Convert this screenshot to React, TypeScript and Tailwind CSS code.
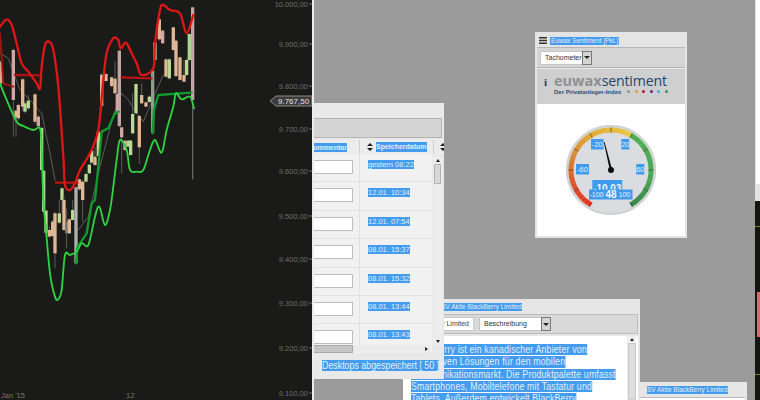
const sans = "font-['Liberation_Sans',Arial,sans-serif]";

type Pt = [number, number];
const line = (pts: Pt[]) => pts.map((p) => p.join(",")).join(" ");

// catmull-rom through the points, the bands are smoothed averages
function smooth(pts: Pt[]) {
  let d = `M${pts[0][0]} ${pts[0][1]}`;
  for (let i = 0; i < pts.length - 1; i++) {
    const p0 = pts[Math.max(i - 1, 0)];
    const p1 = pts[i];
    const p2 = pts[i + 1];
    const p3 = pts[Math.min(i + 2, pts.length - 1)];
    d += `C${p1[0] + (p2[0] - p0[0]) / 6} ${p1[1] + (p2[1] - p0[1]) / 6} ${p2[0] - (p3[0] - p1[0]) / 6} ${p2[1] - (p3[1] - p1[1]) / 6} ${p2[0]} ${p2[1]}`;
  }
  return d;
}

// x, wick top, wick bottom, body top, body bottom, colour
const candles: [number, number, number, number, number, string][] = [
  [3, 180, 262, 185, 250, "#d8ac90"], [40, 145, 410, 150, 300, "#d4a5a5"], [48, 330, 410, 332, 352, "#dfb794"],
  [55, 310, 362, 315, 355, "#dfb794"], [68, 235, 332, 238, 320, "#dfb794"], [75, 305, 340, 310, 335, "#b9d894"],
  [85, 285, 330, 302, 325, "#b9d894"], [105, 280, 372, 283, 365, "#dfb794"], [115, 345, 382, 350, 378, "#d4a5a5"],
  [125, 380, 515, 384, 510, "#a9d890"], [131, 510, 640, 512, 635, "#a9d890"], [138, 630, 702, 632, 698, "#b9d894"],
  [148, 680, 712, 690, 710, "#dfb794"], [158, 660, 712, 665, 708, "#dfb794"], [165, 635, 805, 640, 760, "#dfb794"],
  [178, 600, 672, 640, 668, "#b9d894"], [186, 562, 640, 565, 600, "#b9d894"], [192, 590, 692, 600, 690, "#dfb794"],
  [200, 625, 745, 665, 700, "#777777"], [208, 655, 702, 658, 700, "#dfb794"], [218, 600, 662, 630, 660, "#b9d894"],
  [228, 560, 792, 562, 790, "#b0b0b0"], [238, 535, 572, 538, 568, "#dfb794"], [248, 540, 665, 545, 600, "#dfb794"],
  [258, 518, 548, 522, 545, "#b9d894"], [268, 490, 522, 494, 520, "#b9d894"], [275, 448, 492, 452, 488, "#c9d494"],
  [285, 440, 498, 470, 495, "#dfb794"], [295, 390, 472, 395, 468, "#c9d494"], [305, 220, 322, 224, 318, "#dfb794"],
  [318, 220, 245, 222, 243, "#dfb794"], [335, 230, 262, 232, 258, "#dfb794"], [345, 185, 282, 236, 280, "#dfb794"],
  [352, 280, 342, 282, 340, "#d4a5a5"], [358, 150, 382, 152, 378, "#c4a5a5"], [365, 380, 520, 382, 412, "#d4a5a5"],
  [375, 420, 455, 422, 450, "#dfb794"], [385, 420, 442, 422, 440, "#b9d894"], [392, 420, 468, 422, 465, "#b9d894"],
  [398, 280, 402, 342, 400, "#b9d894"], [408, 250, 342, 252, 340, "#b9d894"], [418, 345, 492, 348, 442, "#dfb794"],
  [425, 250, 312, 285, 310, "#dfb794"], [438, 305, 322, 307, 320, "#dfb794"], [448, 285, 310, 290, 306, "#b9d894"],
  [458, 210, 402, 212, 398, "#8f9f8f"], [465, 125, 182, 127, 180, "#dfb794"], [478, 55, 122, 58, 118, "#dfb794"],
  [488, 88, 132, 92, 130, "#d4a5a5"], [498, 175, 232, 178, 230, "#dfb794"], [508, 175, 238, 178, 235, "#b9d894"],
  [520, 80, 152, 82, 150, "#dfb794"], [528, 118, 232, 122, 228, "#dfb794"], [540, 170, 242, 172, 240, "#dfb794"],
  [552, 180, 247, 225, 245, "#dfb794"], [560, 175, 228, 180, 225, "#b9d894"], [568, 100, 182, 102, 180, "#a9d890"],
  [578, 20, 320, 22, 300, "#c4a5a5"],
];

const axis: [string, number][] = [
  ["10.000,00", 4], ["9.900,00", 44], ["9.800,00", 86], ["9.700,00", 129], ["9.600,00", 171],
  ["9.500,00", 216], ["9.400,00", 259], ["9.300,00", 303], ["9.200,00", 348], ["9.100,00", 393],
];

const upperBand: Pt[] = [[0, 80], [20, 58], [35, 75], [50, 130], [65, 190], [85, 215], [110, 250], [120, 265], [125, 200], [135, 135], [148, 125], [160, 150], [175, 260], [190, 470], [195, 555], [210, 570], [225, 550], [240, 510], [270, 460], [295, 390], [310, 240], [320, 160], [340, 115], [355, 120], [362, 145], [378, 128], [395, 160], [410, 190], [425, 225], [460, 205], [465, 130], [480, 30], [490, 15], [510, 30], [540, 40], [560, 100], [580, 45]];
const lowerBand: Pt[] = [[0, 250], [20, 300], [50, 365], [70, 378], [100, 390], [120, 385], [125, 450], [130, 600], [138, 690], [150, 820], [165, 890], [175, 898], [185, 870], [195, 765], [210, 765], [230, 755], [245, 730], [265, 735], [285, 650], [298, 620], [315, 675], [330, 630], [340, 560], [350, 480], [360, 420], [380, 450], [390, 510], [410, 515], [430, 510], [450, 450], [465, 420], [485, 458], [500, 390], [520, 320], [528, 280], [545, 298], [570, 290], [582, 325]];

function Chart() {
  return (
    <svg width="312" height="400" className={`block shrink-0 bg-[#1a1a18] ${sans}`}>
      <g transform="scale(0.3333)" fill="none" strokeLinejoin="round" strokeLinecap="round">
        <polyline points={line([[0, 160], [25, 175], [45, 230], [60, 270], [90, 300], [125, 340], [150, 460], [165, 540]])} stroke="#6a6a6a" strokeWidth="2.5" />
        <polyline points={line([[235, 690], [265, 650], [300, 500], [340, 345], [365, 280], [385, 300], [410, 340], [430, 365], [470, 270], [490, 225]])} stroke="#6a6a6a" strokeWidth="2.5" />
        {candles.map(([x, wt, wb, bt, bb, c]) => (
          <g key={x}>
            <line x1={x} x2={x} y1={wt} y2={wb} stroke="#5c5c5c" strokeWidth="3" strokeLinecap="butt" />
            <rect x={x - 5} y={bt} width="10" height={bb - bt} fill={c} />
          </g>
        ))}
        <line x1="578" x2="578" y1="320" y2="538" stroke="#666" strokeWidth="4" strokeLinecap="butt" />
        {/* support and resistance steps */}
        <polyline points={line([[45, 225], [122, 226]])} stroke="#a81414" strokeWidth="7" />
        <polyline points={line([[168, 548], [232, 548]])} stroke="#b81414" strokeWidth="7" />
        <polyline points={line([[365, 232], [455, 235]])} stroke="#b81414" strokeWidth="7" />
        <polyline points={line([[0, 100], [5, 170], [10, 250], [40, 260]])} stroke="#a01414" strokeWidth="6" />
        <polyline points={line([[228, 790], [232, 742], [260, 700], [275, 610], [285, 600], [295, 500], [305, 395], [325, 385], [345, 340], [356, 335]])} stroke="#0f9a2c" strokeWidth="7" />
        <polyline points={line([[458, 400], [462, 330], [475, 285], [575, 278]])} stroke="#0f9a2c" strokeWidth="7" />
        <path d={smooth(upperBand)} stroke="#dd1616" strokeWidth="7" />
        <path d={smooth(lowerBand)} stroke="#2fd33f" strokeWidth="5.5" />
      </g>
      {axis.map(([label, y]) => (
        <g key={label}>
          <text x="308" y={y + 3} textAnchor="end" fontSize="7.5" fill="#6e6e6e">{label}</text>
          <line x1="309" x2="312" y1={y} y2={y} stroke="#6e6e6e" />
        </g>
      ))}
      <polygon points="270,101 276,96 312,96 312,106 276,106" fill="#3c3c3c" stroke="#8a8a8a" />
      <text x="278" y="104" fontSize="8" fill="#e4e4e4">9.767,50</text>
      <text x="1" y="398" fontSize="7.5" fill="#777">Jan '15</text>
      <text x="126" y="398" fontSize="7.5" fill="#777">12</text>
    </svg>
  );
}

function Selected({ children, className = "" }: { children: React.ReactNode; className?: string }) {
  return <span className={`bg-[#439cee] text-[#e4eef8] ${className}`}>{children}</span>;
}

function Select({ label, width }: { label: string; width: string }) {
  return (
    <div className={`flex h-[14px] ${width} bg-white rounded-[1px] border border-[#c4c4c4]`}>
      <span className="flex-1 pl-[4px] text-[7px] leading-[12px] text-[#333] whitespace-nowrap overflow-hidden">{label}</span>
      <span className="w-[10px] h-[14px] -mt-px -mr-px flex items-center justify-center bg-[#d4d4d4] border border-[#777]">
        <span className="border-x-[3px] border-t-[3px] border-x-transparent border-t-[#222]" />
      </span>
    </div>
  );
}

function SortIcon() {
  return (
    <svg width="6" height="8" viewBox="0 0 6 8" className="shrink-0">
      <path d="M3 0 6 3H0ZM3 8 0 5h6Z" fill="#222" />
    </svg>
  );
}

const stops: [number, number[]][] = [
  [-150, [232, 48, 28]], [-105, [218, 88, 44]], [-70, [216, 138, 54]], [-30, [224, 170, 50]], [28, [232, 200, 62]],
  [32, [76, 176, 80]], [100, [72, 168, 84]], [150, [56, 130, 70]],
];

function stopColor(a: number) {
  for (let i = 1; i < stops.length; i++) {
    const [a0, c0] = stops[i - 1];
    const [a1, c1] = stops[i];
    if (a <= a1) {
      const t = (a - a0) / (a1 - a0);
      return `rgb(${c0.map((v, k) => Math.round(v + (c1[k] - v) * t)).join(",")})`;
    }
  }
  return "rgb(56,130,70)";
}

const polar = (r: number, deg: number): Pt => {
  const rad = (deg * Math.PI) / 180;
  return [r * Math.sin(rad), -r * Math.cos(rad)];
};

function GaugeLabel({ x, y, w, text }: { x: number; y: number; w: number; text: string }) {
  return (
    <g>
      <rect x={x} y={y} width={w} height="10.5" fill="#3f9bee" />
      <text x={x + w / 2} y={y + 7.8} textAnchor="middle" fontSize="7.5" fill="#eaf2fa">{text}</text>
    </g>
  );
}

function Gauge() {
  const segs = Array.from({ length: 60 }, (_, i) => -150 + i * 5);
  return (
    <svg width="100" height="100" viewBox="-50 -50 100 100" className={sans}>
      <circle r="45" fill="#dbdcdf" />
      <circle r="44" fill="none" stroke="#cfd3cf" strokeWidth="2" />
      {segs.map((a) => {
        const [x1, y1] = polar(40, a);
        const [x2, y2] = polar(40, a + 5.3);
        return <path key={a} d={`M${x1} ${y1}A40 40 0 0 1 ${x2} ${y2}`} fill="none" stroke={stopColor(a + 2.5)} strokeWidth="5" />;
      })}
      {[-150, -120, -90, -60, -30, 0, 30, 60, 90, 120, 150].map((a) => {
        const [x1, y1] = polar(37.5, a);
        const [x2, y2] = polar(42.5, a);
        return <line key={a} x1={x1} y1={y1} x2={x2} y2={y2} stroke="#55432a" strokeWidth="0.7" />;
      })}
      <GaugeLabel x={-20} y={-31} w={12.5} text="-20" />
      <GaugeLabel x={10.3} y={-31} w={8} text="20" />
      <GaugeLabel x={-35} y={-6} w={13} text="-60" />
      <GaugeLabel x={25.3} y={-6} w={8} text="60" />
      <polygon points="-7.2,-28 -6.4,-28 1.2,0 -1.2,0" fill="#0c0c0c" />
      <circle r="3" fill="#0c0c0c" />
      <rect x="-18.7" y="10" width="30" height="10" fill="#3f9bee" />
      <text x="-3.7" y="22" textAnchor="middle" fontSize="10" fontWeight="700" fill="#f2f6fa">-10.03</text>
      <rect x="-22" y="19.5" width="43.5" height="10" fill="#3f9bee" />
      <text x="-21.5" y="27" fontSize="7" fill="#eaf2fa">-100</text>
      <text x="0" y="28" textAnchor="middle" fontSize="10" fontWeight="700" fill="#f4f8fc">48</text>
      <text x="7.8" y="27" fontSize="7" fill="#eaf2fa">100</text>
    </svg>
  );
}

function EuwaxWindow() {
  const dots = ["#8f9296", "#e29a3a", "#b3123f", "#5c2a86", "#3fb0c8", "#2f9a56"];
  return (
    <div className={`absolute left-[221px] top-[32px] w-[152px] h-[206px] flex flex-col bg-[#e4e4e4] p-[2px] ${sans}`}>
      <div className="h-[13px] flex items-center gap-[3px] pl-[2px] shrink-0">
        <svg width="8" height="7" viewBox="0 0 8 7">
          <path d="M0 0h8v1.5H0ZM0 2.75h8v1.5H0ZM0 5.5h8V7H0Z" fill="#333" />
        </svg>
        <Selected className="text-[6.5px] leading-[8px] px-px">Euwax Sentiment [Pkt.]</Selected>
      </div>
      <div className="h-[21px] flex items-center pl-[3px] bg-[#d5d5d5] border-y border-[#b5b5b5] shrink-0">
        <Select label="Tachometer" width="w-[52px]" />
      </div>
      <div className="h-[36px] flex items-center gap-[7px] pl-[7px] bg-[#cfcfcf] border-t border-[#e8e8e8] shrink-0">
        <span className="w-[3px] -mt-[8px] font-['Liberation_Serif',serif] font-bold text-[11px] text-[#1f3f66]">i</span>
        <div className="flex flex-col mb-[5px]">
          <div className="flex items-baseline h-[15px] leading-[15px]">
            <span className="text-[14.5px] font-bold text-[#8e9094] font-['Open_Sans',sans-serif]">euwax</span>
            <span className="text-[14.2px] text-[#23466f] font-['Open_Sans',sans-serif] tracking-[-0.2px]">sentiment</span>
          </div>
          <div className="flex items-center">
            <span className="text-[6px] font-bold leading-[8px] text-[#29507e] w-[73px] whitespace-nowrap">Der Privatanleger-Index</span>
            <div className="flex gap-[4.5px]">
              {dots.map((c) => (
                <svg key={c} width="3" height="3" className="block"><circle cx="1.5" cy="1.5" r="1.5" fill={c} /></svg>
              ))}
            </div>
          </div>
        </div>
      </div>
      <div className="flex-1 bg-white flex items-center justify-center">
        <Gauge />
      </div>
    </div>
  );
}

const saved = ["gestern 08:22", "12.01. 10:34", "12.01. 07:54", "08.01. 15:37", "08.01. 15:32", "08.01. 13:44", "08.01. 13:43"];

function DesktopsWindow() {
  return (
    <div className={`absolute left-0 top-[103px] w-[130px] h-[276px] flex flex-col bg-[#e9e9e9] z-10 overflow-hidden ${sans}`}>
      <div className="h-[15px] shrink-0" />
      <div className="h-[20px] bg-[#d4d4d4] border-y border-r border-[#b4b4b4] shrink-0 mr-[2px]" />
      <div className="h-[14px] mt-[2px] flex items-center bg-[#ececec] shrink-0">
        <div className="w-[33px] flex justify-end overflow-hidden shrink-0">
          <Selected className="text-[7px] leading-[9px] font-bold whitespace-nowrap">Kommentar</Selected>
        </div>
        <div className="w-[13px] h-full border-r border-[#cfcfcf] mr-[7px] shrink-0" />
        <SortIcon />
        <Selected className="ml-[3px] shrink-0 text-[7px] leading-[10px] font-bold whitespace-nowrap">Speicherdatum</Selected>
        <div className="ml-[6px] h-full border-l border-[#cfcfcf] pl-[6px] flex items-center shrink-0"><SortIcon /></div>
      </div>
      <div className="h-[191px] flex shrink-0">
        <div className="w-[118px] flex flex-col shrink-0">
          {saved.map((d) => (
            <div key={d} className="h-[28.4px] shrink-0 flex bg-[#f1f1f1] border-b border-[#e2e2e2]">
              <div className="w-[39px] h-[14px] mt-[6px] bg-white border border-l-0 border-[#bdbdbd] rounded-r-[1px] shrink-0" />
              <div className="w-[7px] border-r border-[#e2e2e2] shrink-0" />
              <Selected className="ml-[8px] mt-[6px] h-[9px] text-[7.5px] leading-[9px] whitespace-nowrap">{d}</Selected>
            </div>
          ))}
        </div>
        <div className="w-[9px] ml-px mt-[3px] flex flex-col items-center bg-[#ededed]">
          <span className="mt-[2px] border-x-[2px] border-b-[3px] border-x-transparent border-b-[#222]" />
          <div className="w-[7px] h-[20px] mt-[2px] bg-[#d8d8d8] border border-[#b0b0b0] rounded-[1px]" />
          <span className="mt-auto mb-[2px] border-x-[2px] border-t-[3px] border-x-transparent border-t-[#222]" />
        </div>
      </div>
      <div className="h-[8px] mr-[14px] flex items-center bg-[#ececec] shrink-0">
        <div className="w-[39px] h-full bg-[#c6c6c6] border border-l-0 border-[#a8a8a8] rounded-r-[1px]" />
        <span className="ml-auto mr-[2px] border-y-[2px] border-l-[3px] border-y-transparent border-l-[#222]" />
      </div>
      <div className="flex-1 flex items-center pl-[8px] pb-px">
        <Selected className="inline-block shrink-0 origin-left scale-x-[0.885] text-[10px] leading-[11px] whitespace-nowrap">Desktops abgespeichert [ 50 ]</Selected>
      </div>
    </div>
  );
}

function ProfileWindow() {
  const text = [
    "BlackBerry ist ein kanadischer Anbieter von",
    "innovativen Lösungen für den mobilen",
    "Kommunikationsmarkt. Die Produktpalette umfasst",
    "Smartphones, Mobiltelefone mit Tastatur und",
    "Tablets. Außerdem entwickelt BlackBerry",
  ];
  return (
    <div className={`absolute left-[89px] top-[299px] w-[237px] h-[101px] flex flex-col bg-[#e6e6e6] pr-[2px] overflow-hidden ${sans}`}>
      <div className="h-[15px] pl-[19px] flex items-center shrink-0">
        <Selected className="text-[6.5px] leading-[8px] whitespace-nowrap">DAX/TSV Aktie BlackBerry Limited</Selected>
      </div>
      <div className="h-[20px] flex items-center gap-[5px] pl-[3px] bg-[#d9d9d9] border border-[#bcbcbc] shrink-0">
        <div className="w-[67px] h-[14px] bg-white border border-[#cacaca] text-[7px] leading-[12px] text-[#444] text-right pr-[4px] whitespace-nowrap overflow-hidden">BlackBerry Limited</div>
        <Select label="Beschreibung" width="w-[72px]" />
      </div>
      <div className="mt-[2px] flex-1 flex bg-white overflow-hidden">
        <div className="flex-1 pl-[8px] pt-[6px] text-[10.5px] tracking-[0.2px] overflow-hidden">
          {text.map((t) => (
            <div key={t} className="whitespace-nowrap h-[12.3px]">
              <Selected className="inline-block origin-left scale-x-[0.835] h-[11.3px] leading-[11.3px]">{t}</Selected>
            </div>
          ))}
        </div>
        <div className="w-[9px] mr-[2px] flex flex-col items-center bg-[#efefef]">
          <span className="mt-[2px] border-x-[2px] border-b-[3px] border-x-transparent border-b-[#222]" />
          <div className="w-[8px] flex-1 mt-[2px] bg-[#dedede] border border-[#c8c8c8] rounded-[1px]" />
        </div>
      </div>
    </div>
  );
}

function SmallWindow() {
  return (
    <div className={`absolute left-[326px] top-[382px] w-[107px] h-[18px] bg-[#e6e6e6] z-10 overflow-hidden ${sans}`}>
      <div className="h-[15px] pl-[7px] flex items-center">
        <Selected className="text-[6.5px] leading-[8px] whitespace-nowrap">SV Aktie BlackBerry Limited</Selected>
      </div>
      <div className="h-[3px] mr-[2px] bg-white border-t border-[#bbb]" />
    </div>
  );
}

export default function App() {
  return (
    <div className="w-[760px] h-[400px] flex overflow-hidden bg-[#9b9b9b]">
      <Chart />
      <div className="w-[2px] bg-[#ececec] shrink-0" />
      <main className="relative flex-1 bg-[#9b9b9b]">
        <ProfileWindow />
        <DesktopsWindow />
        <EuwaxWindow />
        <SmallWindow />
      </main>
      {/* neighbouring chart windows, cut off by the screen edge */}
      <aside className="w-[5px] flex flex-col shrink-0">
        <div className="h-[184px] bg-white border-l border-[#e4e4e4]" />
        <div className="h-[17px] bg-[#e3e3e3]" />
        <div className="flex-1 flex flex-col bg-[#14160f]">
          <div className="h-[26px] border-b border-[#7d7f35]" />
          <div className="h-[65px] shrink-0" />
          <div className="h-[45px] ml-[2px] bg-[#d86a6e]" />
          <div className="h-[38px] border-b border-[#7d7f35]" />
        </div>
      </aside>
    </div>
  );
}
